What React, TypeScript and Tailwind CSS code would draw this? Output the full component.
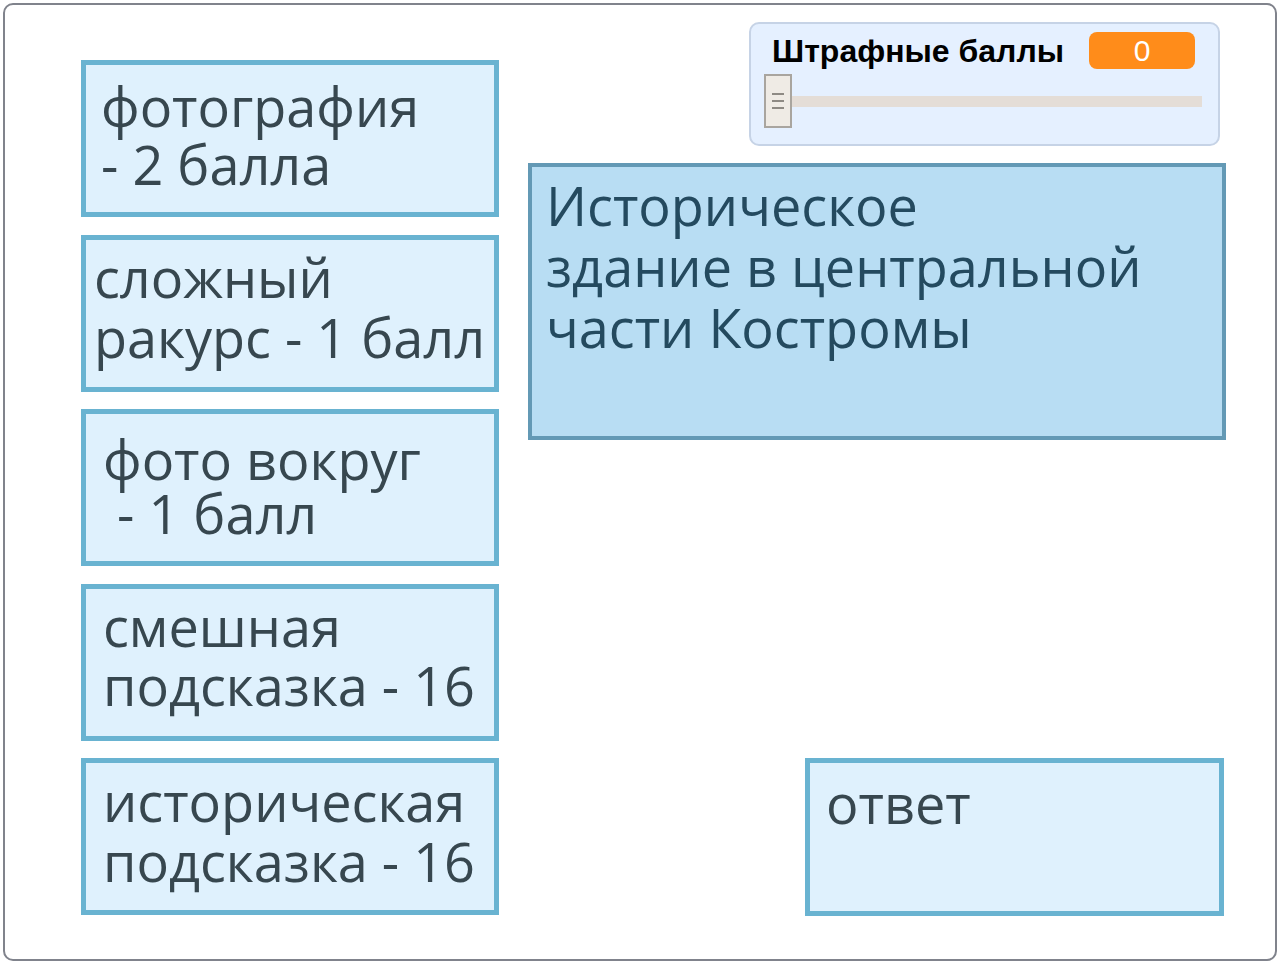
import React from 'react';

interface Card {
    lines: string[];
    pad: string;
}

const cards: Card[] = [
    { lines: ['фотография', '- 2 балла'], pad: 'pt-[12px] pl-[15px] leading-[58px]' },
    { lines: ['сложный', 'ракурс - 1 балл'], pad: 'pt-[7px] pl-[8px] leading-[60px]' },
    { lines: ['фото вокруг', '\u00a0- 1 балл'], pad: 'pt-[18px] pl-[17px] leading-[54px]' },
    { lines: ['смешная', 'подсказка - 16'], pad: 'pt-[8px] pl-[17px] leading-[59px]' },
    { lines: ['историческая', 'подсказка - 16'], pad: 'pt-[8px] pl-[17px] leading-[60px]' },
];

const textFont = { fontFamily: '"Open Sans", "Noto Sans", sans-serif' };

const PenaltyMonitor: React.FC<{ value: number }> = ({ value }) => (
    <div className="ml-[250px] mt-[17px] w-[471px] h-[124px] rounded-[10px] border-2 border-[#c6d3e6] bg-[#e5f0ff] pl-[13px] pr-[14px] pt-[8px]">
        <div className="flex items-center">
            <span className="ml-[8px] font-['Liberation_Sans',Arial,sans-serif] font-bold text-[32px] leading-none text-black mr-[25px]">
                Штрафные баллы
            </span>
            <span className="w-[106px] h-[37px] rounded-[8px] bg-[#ff8c1a] text-white text-[30px] leading-[37px] text-center font-['Liberation_Sans',Arial,sans-serif]">
                {value}
            </span>
        </div>
        {/* slider */}
        <div className="flex items-center mt-[5px]">
            <div className="w-[28px] h-[54px] border-2 border-[#a9a59f] bg-[#efebe5] flex flex-col items-center justify-center gap-[5px] shrink-0">
                <div className="w-[12px] h-[2px] bg-[#8e8a84]" />
                <div className="w-[12px] h-[2px] bg-[#8e8a84]" />
                <div className="w-[12px] h-[2px] bg-[#8e8a84]" />
            </div>
            <div className="flex-1 h-[11px] bg-[#e4ddd7] mr-[2px]" />
        </div>
    </div>
);

export default function App() {
    return (
        <div className="w-[1280px] h-[964px] bg-white p-[3px]">
            <div className="flex h-[958px] rounded-[10px] border-[2.5px] border-[#80838c] bg-white pl-[76px]" style={textFont}>
                {/* left column */}
                <div className="w-[418px] pt-[55px] flex flex-col gap-[17.5px] shrink-0">
                    {cards.map((c, i) => (
                        <div
                            key={i}
                            className={`h-[157px] border-[5px] border-[#69b3d1] bg-[#dff1fd] text-[#37474f] text-[54px] whitespace-pre ${c.pad}`}
                        >
                            {c.lines.map((l, j) => (
                                <div key={j}>{l}</div>
                            ))}
                        </div>
                    ))}
                </div>

                {/* right column */}
                <div className="flex-1 flex flex-col">
                    <PenaltyMonitor value={0} />

                    <div className="ml-[29px] mt-[17px] w-[698px] h-[277px] border-4 border-[#6399b5] bg-[#b8ddf3] text-[#244a5f] text-[54px] leading-[61px] pl-[14px] pt-[8px]">
                        <div>Историческое</div>
                        <div>здание в центральной</div>
                        <div>части Костромы</div>
                    </div>

                    <div className="ml-[306px] mt-[318px] w-[419px] h-[158px] border-[5px] border-[#69b3d1] bg-[#dff1fd] text-[#37474f] text-[54px] leading-[60px] pl-[16px] pt-[10px]">
                        ответ
                    </div>
                </div>
            </div>
        </div>
    );
}
